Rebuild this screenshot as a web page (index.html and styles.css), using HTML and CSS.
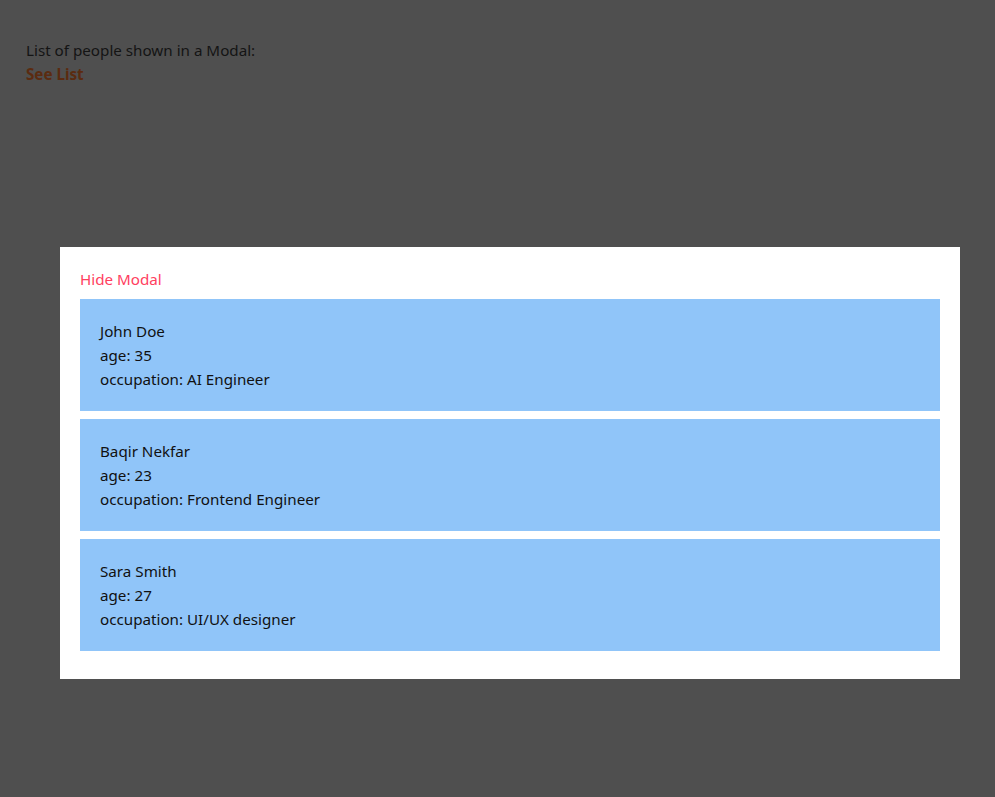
FILE: index.html
```html
<!DOCTYPE html>
<html lang="en">
<head>
<meta charset="utf-8">
<title>People Modal</title>
<link rel="stylesheet" href="styles.css">
</head>
<body>
<main class="page">
  <p class="intro">List of people shown in a Modal:</p>
  <button class="see-list">See List</button>
</main>
<div class="modal">
  <button class="hide">Hide Modal</button>
  <div class="card">
    <div>John Doe</div>
    <div>age: 35</div>
    <div>occupation: AI Engineer</div>
  </div>
  <div class="card">
    <div>Baqir Nekfar</div>
    <div>age: 23</div>
    <div>occupation: Frontend Engineer</div>
  </div>
  <div class="card">
    <div>Sara Smith</div>
    <div>age: 27</div>
    <div>occupation: UI/UX designer</div>
  </div>
</div>
</body>
</html>
```
FILE: styles.css
```css
html, body {
  margin: 0;
  padding: 0;
  height: 100%;
}
body {
  background: #4f4f4f;
  font-family: "Segoe UI", "Noto Sans", "Open Sans", sans-serif;
  font-size: 15.2px;
  line-height: 24px;
  color: #141414;
}
.page {
  padding: 38px 26px;
}
.intro {
  margin: 0;
}
.see-list {
  display: block;
  margin: 0;
  padding: 0;
  border: none;
  background: none;
  font: inherit;
  font-weight: 700;
  color: #5b2b10;
  line-height: 24px;
  cursor: pointer;
}
.modal {
  position: fixed;
  left: 60px;
  top: 247px;
  width: 900px;
  box-sizing: border-box;
  background: #fff;
  padding: 20px;
}
.hide {
  display: block;
  margin: 0 0 8px;
  padding: 0;
  border: none;
  background: none;
  font: inherit;
  line-height: 24px;
  color: #ff4060;
  cursor: pointer;
}
.card {
  background: #90c5f9;
  padding: 20px;
  margin-bottom: 8px;
  color: #111;
}
```
